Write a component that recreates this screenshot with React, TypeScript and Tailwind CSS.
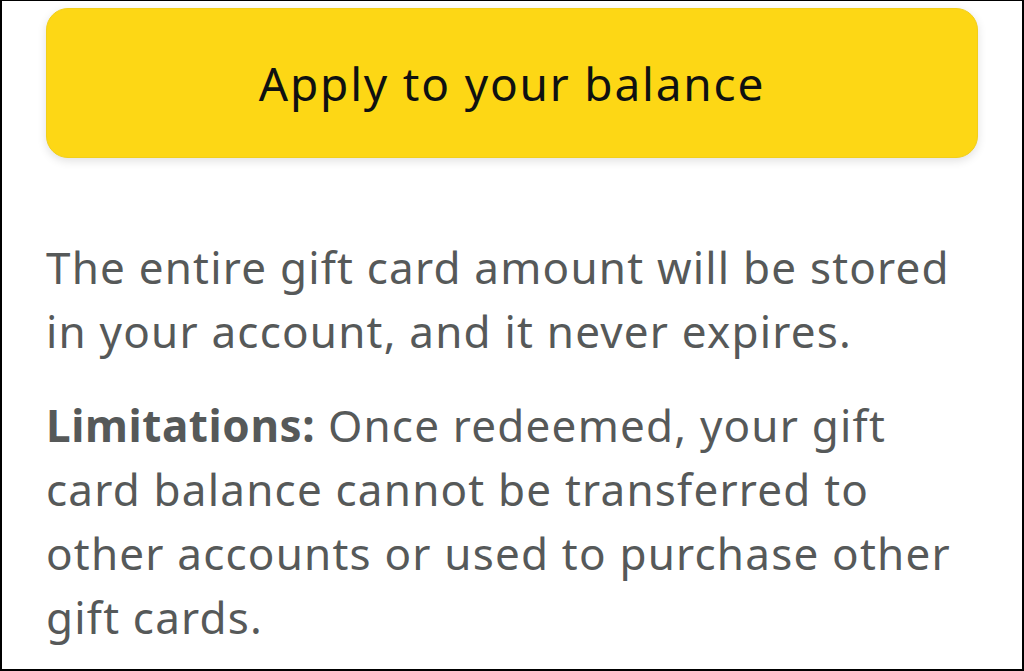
export default function App() {
  return (
    <div className="w-[1024px] h-[671px] overflow-hidden bg-white border-x-2 border-t border-b-2 border-black font-['Noto_Sans',sans-serif]">
      <div className="pl-[44px] pr-[44px] pt-[7px]">
        <button className="w-[932px] h-[150px] rounded-[22px] bg-[#fdd715] border border-[#f2cf1a] shadow-[0_3px_10px_rgba(0,0,0,0.12)] text-[#0f1111] text-[46px] tracking-[1.8px] leading-none">
          Apply to your balance
        </button>

        <p className="mt-[77px] text-[44px] tracking-[1.2px] leading-[64px] text-[#565959]">
          The entire gift card amount will be stored in your account, and it never expires.
        </p>
        <p className="mt-[30px] text-[44px] tracking-[1.2px] leading-[64px] text-[#565959]">
          <span className="font-bold tracking-[0.6px]">Limitations:</span> Once redeemed, your gift card balance cannot be transferred to other accounts or used to purchase other gift cards.
        </p>
      </div>
    </div>
  );
}
